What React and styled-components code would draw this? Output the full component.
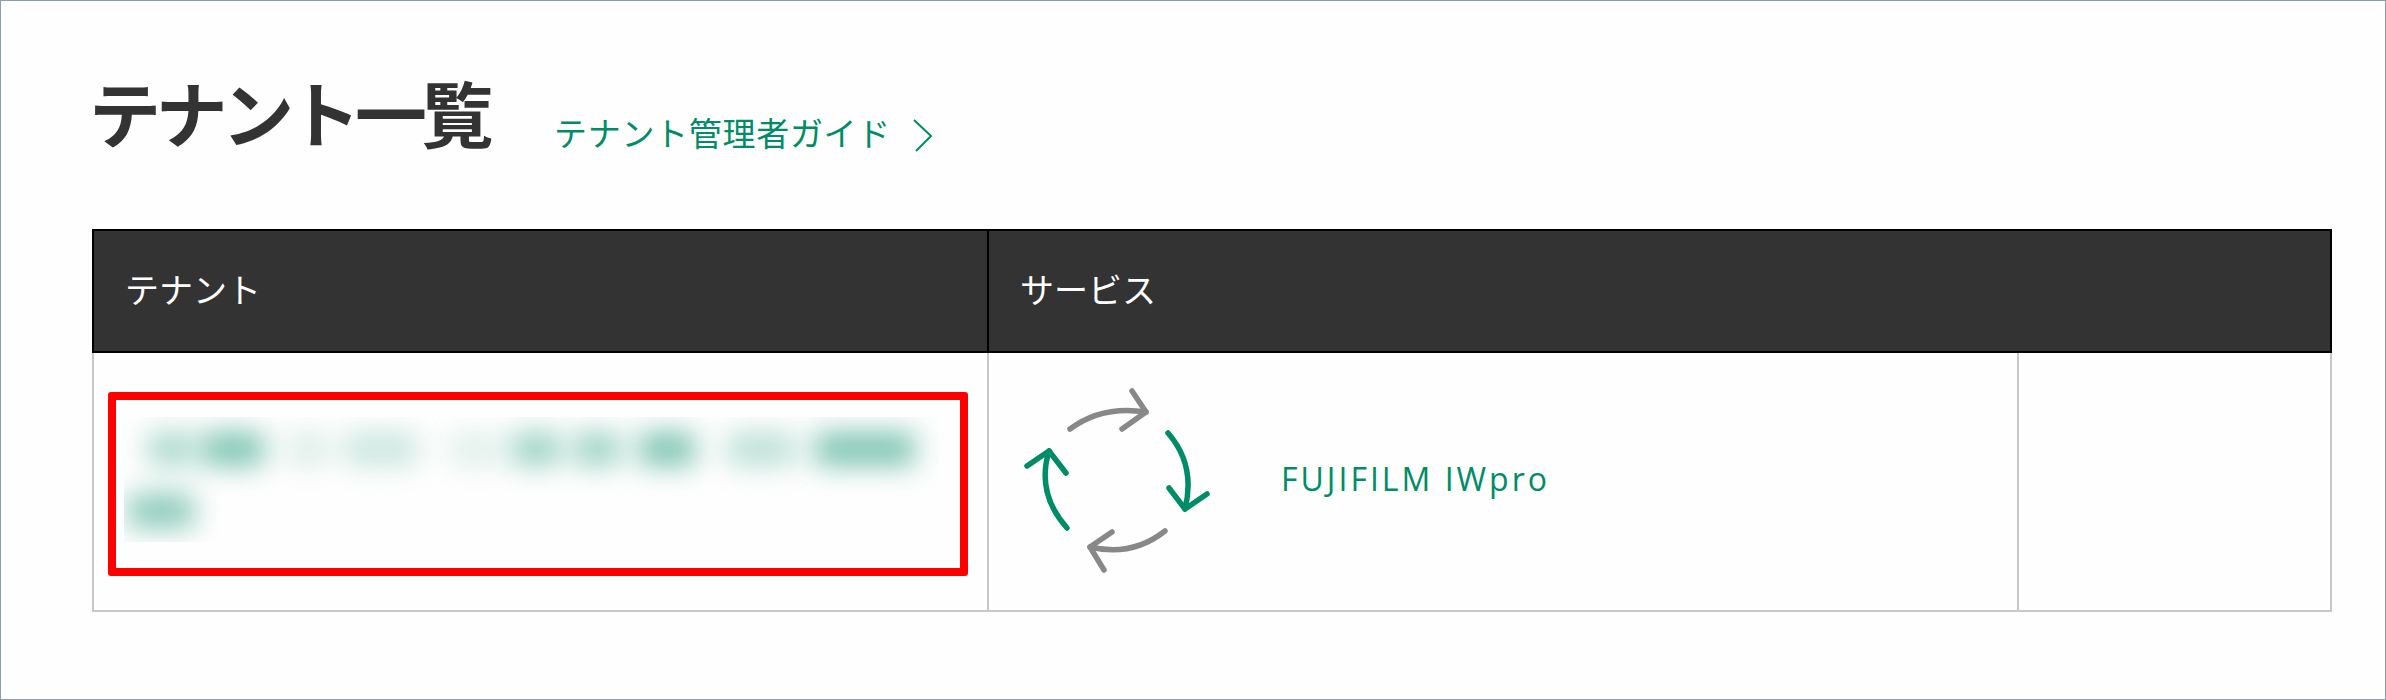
import React from 'react'
import styled, { createGlobalStyle } from 'styled-components'

const GlobalStyle = createGlobalStyle`
  html, body {
    margin: 0;
    padding: 0;
    background: #fefefe;
  }
  * {
    box-sizing: border-box;
  }
`

const FONT = `"Noto Sans CJK JP", "Noto Sans", sans-serif`
const GREEN = '#008c66'

const Page = styled.div`
  width: 2386px;
  height: 700px;
  padding: 62px 53px 0 91px;
  border: 1px solid #8a9db5;
  background: #fefefe;
  font-family: ${FONT};
  color: #333333;
`

const TitleRow = styled.div`
  display: flex;
  align-items: flex-end;
  height: 100px;
`

const Title = styled.h1`
  margin: 0 0 4px -3px;
  font-size: 72px;
  line-height: 96px;
  font-weight: 700;
  letter-spacing: -5.5px;
  color: #333333;
`

const GuideLink = styled.a`
  display: flex;
  align-items: center;
  gap: 22px;
  margin: 0 0 9px 66px;
  font-size: 33px;
  line-height: 44px;
  letter-spacing: 0.7px;
  color: ${GREEN};
  text-decoration: none;
`

const Chevron = styled.svg`
  width: 20px;
  height: 33px;
  flex: none;
  margin-top: 6px;
`

const Table = styled.div`
  margin-top: 66px;
  width: 2240px;
`

const HeadRow = styled.div`
  display: grid;
  grid-template-columns: 895px 1fr;
  height: 124px;
  border: 2px solid #000000;
  background: #333333;
`

const HeadCell = styled.div`
  display: flex;
  align-items: center;
  padding: 0 0 6px 31px;
  font-size: 34px;
  color: #ffffff;
  border-right: ${(p) => (p.$last ? 'none' : '2px solid #000000')};
`

const BodyRow = styled.div`
  display: grid;
  grid-template-columns: 895px 1030px 1fr;
  height: 259px;
  border: 2px solid #c8c8c8;
  border-top: none;
`

const BodyCell = styled.div`
  display: flex;
  align-items: center;
  border-right: ${(p) => (p.$last ? 'none' : '2px solid #c8c8c8')};
`

const TenantCell = styled(BodyCell)`
  padding: 39px 19px 34px 14px;
`

const RedFrame = styled.div`
  width: 100%;
  height: 184px;
  padding: 17px 16px 26px 8px;
  border: 8px solid #ff0000;
  border-radius: 3px;
`

const BlurClip = styled.div`
  display: flex;
  flex-direction: column;
  height: 125px;
  overflow: hidden;
`

const BlurLine = styled.div`
  display: flex;
  height: 34px;
  flex: none;
  margin-top: ${(p) => p.$top}px;
`

const Blob = styled.span`
  flex: none;
  width: ${(p) => p.$w}px;
  margin-left: ${(p) => p.$left}px;
  background: ${GREEN};
  opacity: ${(p) => p.$strength};
  filter: blur(14px);
`

const ServiceCell = styled(BodyCell)`
  padding-left: 11px;
`

const ServiceIcon = styled.svg`
  width: 250px;
  height: 230px;
  flex: none;
  margin-top: -16px;
`

const ServiceLink = styled.a`
  margin: 0 0 6px 31px;
  font-family: "Open Sans", sans-serif;
  font-size: 32px;
  letter-spacing: 3px;
  color: ${GREEN};
  text-decoration: none;
`

const blobsFirst = [
  { left: 24, w: 46, strength: 0.32 },
  { left: 8, w: 62, strength: 0.5 },
  { left: 24, w: 40, strength: 0.14 },
  { left: 16, w: 74, strength: 0.2 },
  { left: 32, w: 50, strength: 0.12 },
  { left: 12, w: 48, strength: 0.38 },
  { left: 14, w: 46, strength: 0.38 },
  { left: 19, w: 56, strength: 0.5 },
  { left: 32, w: 68, strength: 0.26 },
  { left: 20, w: 100, strength: 0.5 },
]

const App = () => {
  return (
    <>
      <GlobalStyle />
      <Page>
        <TitleRow>
          <Title>テナント一覧</Title>
          <GuideLink href="#">
            テナント管理者ガイド
            <Chevron viewBox="0 0 20 33" fill="none" stroke={GREEN} strokeWidth="2">
              <polyline points="1,1 18,17 3,32" />
            </Chevron>
          </GuideLink>
        </TitleRow>
        <Table>
          <HeadRow>
            <HeadCell>テナント</HeadCell>
            <HeadCell $last>サービス</HeadCell>
          </HeadRow>
          <BodyRow>
            <TenantCell>
              <RedFrame>
                <BlurClip>
                  <BlurLine $top={15}>
                    {blobsFirst.map((b, i) => (
                      <Blob key={i} $left={b.left} $w={b.w} $strength={b.strength} />
                    ))}
                  </BlurLine>
                  <BlurLine $top={28}>
                    <Blob $left={4} $w={66} $strength={0.46} />
                  </BlurLine>
                </BlurClip>
              </RedFrame>
            </TenantCell>
            <ServiceCell>
              <ServiceIcon viewBox="0 0 250 230" fill="none" strokeWidth="5.5" strokeLinecap="round" strokeLinejoin="round">
                <g stroke="#888888">
                  <path d="M70 70 Q102 46 146 53" />
                  <path d="M132 32 L146 53 L122 70" />
                  <path d="M165 172 Q132 198 90 188" />
                  <path d="M112 173 L90 188 L104 211" />
                </g>
                <g stroke={GREEN}>
                  <path d="M168 74 Q196 106 185 150" />
                  <path d="M169 129 L185 150 L207 135" />
                  <path d="M67 169 Q36 134 49 92" />
                  <path d="M27 107 L49 92 L66 114" />
                </g>
              </ServiceIcon>
              <ServiceLink href="#">FUJIFILM IWpro</ServiceLink>
            </ServiceCell>
            <BodyCell $last />
          </BodyRow>
        </Table>
      </Page>
    </>
  )
}

export default App
